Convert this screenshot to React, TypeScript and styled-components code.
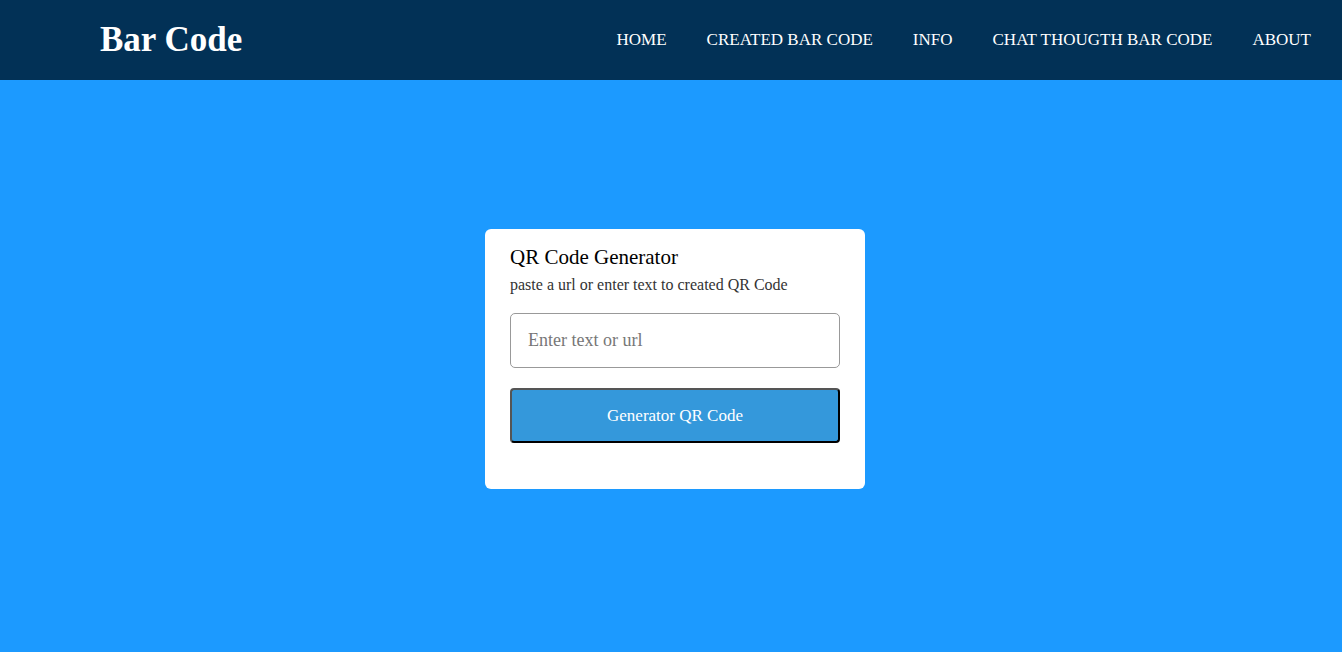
import React from "react";
import styled, { createGlobalStyle } from "styled-components";

const Global = createGlobalStyle`
  html, body { margin: 0; padding: 0; }
  body {
    background: #1c9aff;
    font-family: "Liberation Serif", "Times New Roman", serif;
    min-height: 652px;
  }
  * { box-sizing: border-box; }
`;

const Header = styled.header`
  height: 80px;
  background: #023156;
  display: flex;
  align-items: center;
  justify-content: space-between;
  padding: 0 31px 0 100px;
`;

const Logo = styled.h1`
  margin: 0;
  color: #fff;
  font-size: 35px;
  font-weight: bold;
`;

const Nav = styled.nav`
  display: flex;
  gap: 40px;
`;

const NavLink = styled.a`
  color: #fff;
  font-size: 17px;
  text-decoration: none;
  text-transform: uppercase;
`;

const Main = styled.main`
  display: flex;
  justify-content: center;
  padding: 149px 0 0 8px;
`;

const Card = styled.div`
  width: 380px;
  height: 260px;
  background: #fff;
  border-radius: 6px;
  padding: 16px 25px 25px;
  display: flex;
  flex-direction: column;
`;

const Title = styled.h2`
  margin: 0;
  font-size: 21px;
  font-weight: normal;
  color: #000;
`;

const Sub = styled.p`
  margin: 6px 0 0;
  font-size: 16px;
  color: #333;
`;

const Input = styled.input`
  margin-top: 19px;
  height: 55px;
  width: 100%;
  border: 1px solid #999;
  border-radius: 5px;
  padding: 0 17px;
  font-family: inherit;
  font-size: 18px;
  outline: none;
  &::placeholder { color: #777; }
`;

const Button = styled.button`
  margin-top: 20px;
  height: 55px;
  width: 100%;
  background: #3498db;
  color: #fff;
  border: 2px outset #000;
  border-color: #555 #000 #000 #555;
  border-radius: 4px;
  font-family: inherit;
  font-size: 17px;
  cursor: pointer;
`;

export default function App() {
  return (
    <>
      <Global />
      <Header>
        <Logo>Bar Code</Logo>
        <Nav>
          <NavLink href="#">Home</NavLink>
          <NavLink href="#">Created Bar Code</NavLink>
          <NavLink href="#">Info</NavLink>
          <NavLink href="#">Chat Thougth Bar Code</NavLink>
          <NavLink href="#">About</NavLink>
        </Nav>
      </Header>
      <Main>
        <Card>
          <Title>QR Code Generator</Title>
          <Sub>paste a url or enter text to created QR Code</Sub>
          <Input placeholder="Enter text or url" />
          <Button>Generator QR Code</Button>
        </Card>
      </Main>
    </>
  );
}
